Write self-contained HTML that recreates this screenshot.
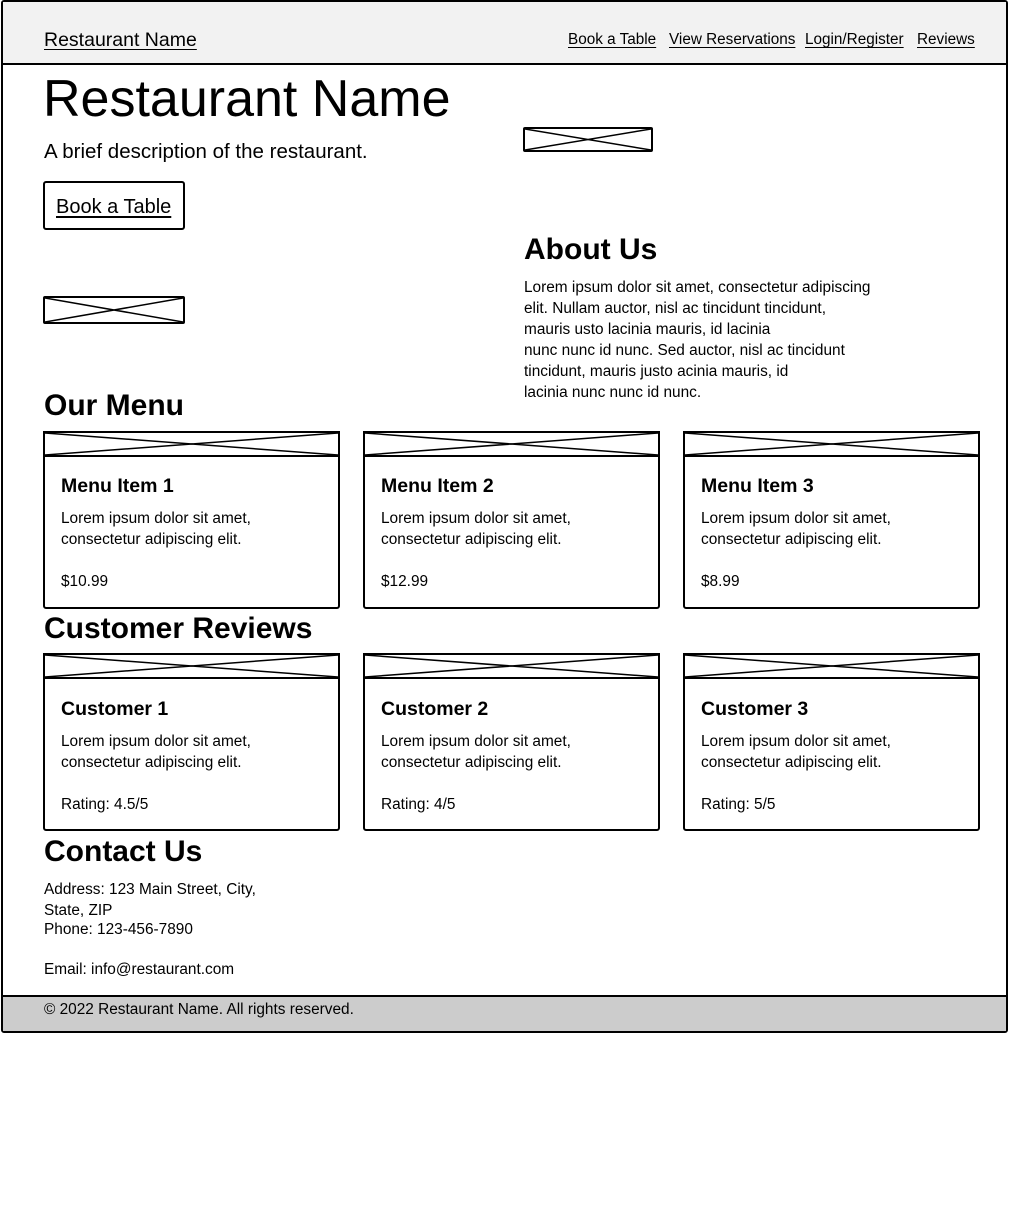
<!DOCTYPE html>
<html><head><meta charset="utf-8"><style>
*{margin:0;padding:0;box-sizing:border-box}
body{width:1024px;height:1206px;background:#fff;position:relative;font-family:"Liberation Sans",sans-serif;color:#000;overflow:hidden}
.a{position:absolute}
.t{position:absolute;white-space:nowrap;line-height:20px;height:20px}
.u{text-decoration:underline;text-underline-offset:3px}
.ph{position:absolute;border:2px solid #000;border-radius:2px}
.ph svg{position:absolute;left:0;top:0;width:100%;height:100%}
.card{position:absolute;border:2px solid #000;border-radius:3px;width:297px;height:178px}
.card .img{position:absolute;left:-2px;top:-2px;width:297px;height:26px;border:2px solid #000}
.card .img svg{position:absolute;left:0;top:0;width:100%;height:100%}
h2{position:absolute;font-size:30px;font-weight:bold;line-height:34px;white-space:nowrap}
.ct{font-size:19.5px;font-weight:bold}
.cd{font-size:15.4px;line-height:21px;height:auto}
</style></head><body>
<div class="a" style="left:1px;top:0;width:1007px;height:1033px;border:2px solid #000;border-radius:3px"></div>
<div class="a" style="left:3px;top:2px;width:1003px;height:63px;background:#f2f2f2;border-bottom:2px solid #000"></div>
<div class="a" style="left:3px;top:995px;width:1003px;height:36px;background:#ccc;border-top:2px solid #000"></div>

<div class="t u" style="left:44px;top:30px;font-size:19.5px">Restaurant Name</div>
<div class="t u" style="left:568px;top:30px;font-size:15.3px">Book a Table</div>
<div class="t u" style="left:669px;top:30px;font-size:15.3px">View Reservations</div>
<div class="t u" style="left:805px;top:30px;font-size:15.3px">Login/Register</div>
<div class="t u" style="left:917px;top:30px;font-size:15.3px">Reviews</div>

<div class="t" style="left:43px;top:71px;font-size:52px;line-height:56px;height:56px">Restaurant Name</div>
<div class="t" style="left:44px;top:142px;font-size:20.5px">A brief description of the restaurant.</div>
<div class="a" style="left:43px;top:181px;width:142px;height:49px;border:2px solid #000;border-radius:3px"></div>
<div class="t u" style="left:56px;top:197px;font-size:20px">Book a Table</div>

<div class="ph" style="left:43px;top:296px;width:142px;height:28px"><svg viewBox="0 0 100 100" preserveAspectRatio="none"><path d="M0 0L100 100M100 0L0 100" stroke="#000" stroke-width="1.5" vector-effect="non-scaling-stroke"/></svg></div>
<div class="ph" style="left:523px;top:127px;width:130px;height:25px"><svg viewBox="0 0 100 100" preserveAspectRatio="none"><path d="M0 0L100 100M100 0L0 100" stroke="#000" stroke-width="1.5" vector-effect="non-scaling-stroke"/></svg></div>

<h2 style="left:524px;top:233px">About Us</h2>
<div class="t cd" style="left:524px;top:277px">Lorem ipsum dolor sit amet, consectetur adipiscing<br>elit. Nullam auctor, nisl ac tincidunt tincidunt,<br>mauris usto lacinia mauris, id lacinia<br>nunc nunc id nunc. Sed auctor, nisl ac tincidunt<br>tincidunt, mauris justo acinia mauris, id<br>lacinia nunc nunc id nunc.</div>

<h2 style="left:44px;top:389px">Our Menu</h2>

<div class="card" style="left:43px;top:431px"><div class="img"><svg viewBox="0 0 100 100" preserveAspectRatio="none"><path d="M0 0L100 100M100 0L0 100" stroke="#000" stroke-width="1.5" vector-effect="non-scaling-stroke"/></svg></div>
<div class="t ct" style="left:16px;top:43px">Menu Item 1</div><div class="t cd" style="left:16px;top:75px">Lorem ipsum dolor sit amet,<br>consectetur adipiscing elit.</div><div class="t cd" style="left:16px;top:138px">$10.99</div></div>
<div class="card" style="left:363px;top:431px"><div class="img"><svg viewBox="0 0 100 100" preserveAspectRatio="none"><path d="M0 0L100 100M100 0L0 100" stroke="#000" stroke-width="1.5" vector-effect="non-scaling-stroke"/></svg></div>
<div class="t ct" style="left:16px;top:43px">Menu Item 2</div><div class="t cd" style="left:16px;top:75px">Lorem ipsum dolor sit amet,<br>consectetur adipiscing elit.</div><div class="t cd" style="left:16px;top:138px">$12.99</div></div>
<div class="card" style="left:683px;top:431px"><div class="img"><svg viewBox="0 0 100 100" preserveAspectRatio="none"><path d="M0 0L100 100M100 0L0 100" stroke="#000" stroke-width="1.5" vector-effect="non-scaling-stroke"/></svg></div>
<div class="t ct" style="left:16px;top:43px">Menu Item 3</div><div class="t cd" style="left:16px;top:75px">Lorem ipsum dolor sit amet,<br>consectetur adipiscing elit.</div><div class="t cd" style="left:16px;top:138px">$8.99</div></div>

<h2 style="left:44px;top:612px">Customer Reviews</h2>

<div class="card" style="left:43px;top:653px"><div class="img"><svg viewBox="0 0 100 100" preserveAspectRatio="none"><path d="M0 0L100 100M100 0L0 100" stroke="#000" stroke-width="1.5" vector-effect="non-scaling-stroke"/></svg></div>
<div class="t ct" style="left:16px;top:44px">Customer 1</div><div class="t cd" style="left:16px;top:76px">Lorem ipsum dolor sit amet,<br>consectetur adipiscing elit.</div><div class="t cd" style="left:16px;top:139px">Rating: 4.5/5</div></div>
<div class="card" style="left:363px;top:653px"><div class="img"><svg viewBox="0 0 100 100" preserveAspectRatio="none"><path d="M0 0L100 100M100 0L0 100" stroke="#000" stroke-width="1.5" vector-effect="non-scaling-stroke"/></svg></div>
<div class="t ct" style="left:16px;top:44px">Customer 2</div><div class="t cd" style="left:16px;top:76px">Lorem ipsum dolor sit amet,<br>consectetur adipiscing elit.</div><div class="t cd" style="left:16px;top:139px">Rating: 4/5</div></div>
<div class="card" style="left:683px;top:653px"><div class="img"><svg viewBox="0 0 100 100" preserveAspectRatio="none"><path d="M0 0L100 100M100 0L0 100" stroke="#000" stroke-width="1.5" vector-effect="non-scaling-stroke"/></svg></div>
<div class="t ct" style="left:16px;top:44px">Customer 3</div><div class="t cd" style="left:16px;top:76px">Lorem ipsum dolor sit amet,<br>consectetur adipiscing elit.</div><div class="t cd" style="left:16px;top:139px">Rating: 5/5</div></div>

<h2 style="left:44px;top:835px">Contact Us</h2>
<div class="t cd" style="left:44px;top:879px">Address: 123 Main Street, City,<br>State, ZIP</div>
<div class="t cd" style="left:44px;top:919px">Phone: 123-456-7890</div>
<div class="t cd" style="left:44px;top:959px">Email: info@restaurant.com</div>
<div class="t cd" style="left:44px;top:999px">© 2022 Restaurant Name. All rights reserved.</div>
</body></html>
